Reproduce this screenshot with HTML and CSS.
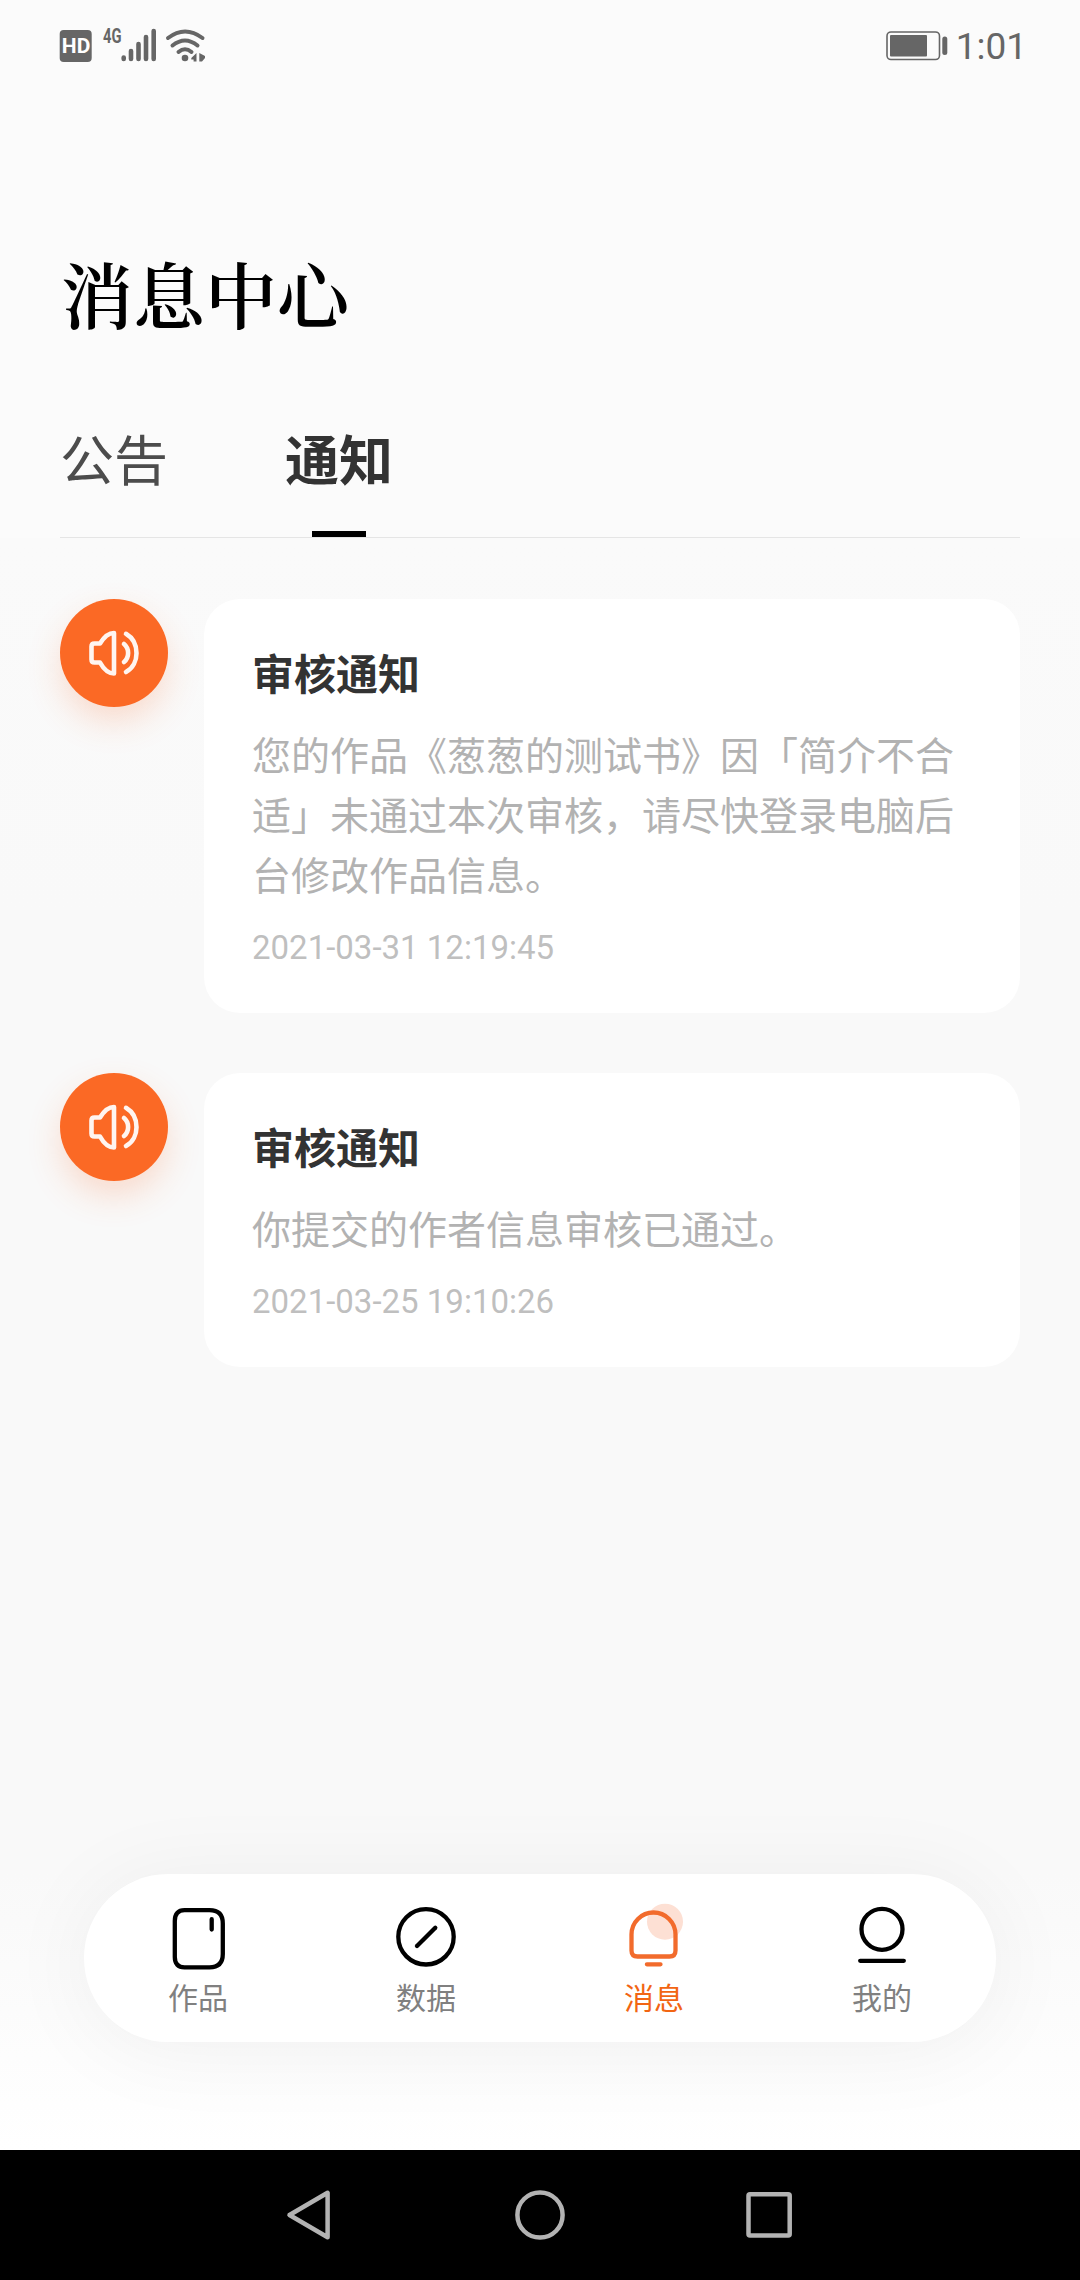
FILE: index.html
```html
<!DOCTYPE html>
<html lang="zh-CN">
<head>
<meta charset="utf-8">
<title>消息中心</title>
<link rel="stylesheet" href="styles.css">
</head>
<body>
<div class="screen">
  <header class="top">
    <div class="status">
      <svg class="status-left" width="150" height="60" viewBox="0 -10 150 60" fill="#666">
        <rect x="-.3" y="4" width="32" height="32" rx="4"/>
        <text class="hd" x="1.800" y="27.300" textLength="28.500" lengthAdjust="spacingAndGlyphs" fill="#fff">HD</text>
        <text class="net" x="43" y="17" textLength="18.500" lengthAdjust="spacingAndGlyphs">4G</text>
        <g stroke="#666" stroke-width="4.600" stroke-linecap="round">
          <path d="M63.700 31.500V33M71 25V33M78.500 18V33M86 11V33M93.700 5V33"/>
        </g>
        <g fill="none" stroke="#666" stroke-width="4" stroke-linecap="round">
          <path d="M108 12Q125-1 142.500 12M112.500 19.500Q125 9.500 137.500 19.500M118.500 26Q125 20.500 131.500 26"/>
        </g>
        <circle cx="125" cy="32" r="3.300"/>
        <path d="M136.500 27V35.500H133.600V33.500H131.300V32ZM139.300 27L145 30V32L142 35.500H139.300Z"/>
      </svg>
      <div class="status-right">
        <svg width="62" height="30" viewBox="0 0 62 30">
          <rect x="1" y="1" width="52.500" height="27.500" rx="4" fill="none" stroke="#666" stroke-width="1.600"/>
          <rect x="4" y="4" width="37" height="21.500" rx="1" fill="#666"/>
          <rect x="56.300" y="5.500" width="5" height="18.500" rx="2.500" fill="#666"/>
        </svg>
        <span class="clock">1:01</span>
      </div>
    </div>
    <h1 class="title">消息中心</h1>
    <nav class="tabs">
      <a class="tab">公告</a>
      <a class="tab tab-active">通知</a>
    </nav>
  </header>

  <svg class="defs" width="0" height="0">
    <symbol id="speaker" viewBox="0 0 108 108">
      <g fill="none" stroke="#fff5f0" stroke-width="4.600" stroke-linecap="round" stroke-linejoin="round">
        <path d="M54 34V74.500C47.500 74.500 42.500 68 40 63.500H34.500Q31.500 63.500 31.500 60.500V47.500Q31.500 44.500 34.500 44.500H40C42.500 40.500 47.500 34 54 34Z"/>
        <path d="M64 45C69.500 49.500 69.500 58.500 64 63M66 34.800C80 43 80 65.500 66 73"/>
      </g>
    </symbol>
  </svg>

  <main class="list">
    <article class="notice">
      <svg class="avatar"><use href="#speaker"/></svg>
      <div class="card">
        <h2 class="card-title">审核通知</h2>
        <p class="card-text">您的作品《葱葱的测试书》因「简介不合<br>适」未通过本次审核，请尽快登录电脑后<br>台修改作品信息。</p>
        <time class="card-time">2021-03-31 12:19:45</time>
      </div>
    </article>
    <article class="notice">
      <svg class="avatar"><use href="#speaker"/></svg>
      <div class="card">
        <h2 class="card-title">审核通知</h2>
        <p class="card-text">你提交的作者信息审核已通过。</p>
        <time class="card-time">2021-03-25 19:10:26</time>
      </div>
    </article>
  </main>

  <div class="dock">
    <nav class="menu">
      <a class="item">
        <svg width="72" height="72" viewBox="0 0 72 72" fill="none" stroke="#000" stroke-width="4.300" stroke-linecap="round"><path d="M22.500 7.200H47.500Q60.800 7.200 60.800 20.500V51Q60.800 64.300 47.500 64.300H22.500Q12.800 64.300 12.800 54V18Q12.800 7.200 22.500 7.200ZM49.700 16.200V26.500"/></svg>
        <span>作品</span>
      </a>
      <a class="item">
        <svg width="72" height="72" viewBox="0 0 72 72" fill="none" stroke="#000" stroke-width="4.300" stroke-linecap="round"><circle cx="36" cy="33.800" r="27.700"/><path d="M27 43L45.300 24.700"/></svg>
        <span>数据</span>
      </a>
      <a class="item item-active">
        <svg width="72" height="72" viewBox="0 0 72 72" fill="none" stroke="#f26b2c" stroke-width="4.300" stroke-linecap="round"><circle cx="47" cy="18.700" r="18" fill="#fde0d4" stroke="none"/><path d="M13.500 31.500A22 22 0 0 1 57.500 31.500V47.500Q57.500 53.500 51.500 53.500H19.500Q13.500 53.500 13.500 47.500ZM28.900 61.300H42.500"/></svg>
        <span>消息</span>
      </a>
      <a class="item">
        <svg width="72" height="72" viewBox="0 0 72 72" fill="none" stroke="#000" stroke-width="4.300" stroke-linecap="round"><circle cx="36" cy="26.300" r="20.500"/><path d="M14.200 57.800H57.800"/></svg>
        <span>我的</span>
      </a>
    </nav>
  </div>

  <footer class="system">
    <svg width="540" height="130" viewBox="0 0 540 130" fill="none" stroke="#b3b3b3" stroke-width="4.500" stroke-linejoin="round">
      <path d="M57.600 42.800V87.200L19.500 65Z"/>
      <circle cx="270" cy="65" r="22.600"/>
      <rect x="478.500" y="44.300" width="41.200" height="41.200" rx="1.500"/>
    </svg>
  </footer>
</div>
</body>
</html>
```
FILE: styles.css
```css
* { box-sizing: border-box; }
body, h1, h2, p { margin: 0; }
body {
  font-family: Roboto, "Noto Sans CJK SC", sans-serif;
  background: #f9f9f9;
}
.screen {
  width: 1080px;
  height: 2280px;
  display: flex;
  flex-direction: column;
  overflow: hidden;
}
.defs { display: block; height: 0; }
.top { height: 538px; background: #fbfbfb; padding: 0 60px; }
.status {
  height: 90px;
  padding-top: 2px;
  display: flex;
  justify-content: space-between;
  align-items: center;
  margin-right: -7px;
}
.status-left { overflow: visible; }
.hd { font: 700 21px Roboto, sans-serif; }
.net { font: 700 20px Roboto, sans-serif; }
.status-right { display: flex; align-items: center; gap: 8px; }
.clock { padding-top: 2px; font-size: 37px; line-height: 40px; color: #666; }
.title {
  margin-top: 148px;
  font: 600 72px/108px "Noto Serif CJK SC", "Noto Serif SC", "Noto Serif CJK JP", "Noto Sans CJK SC", serif;
  text-indent: 1px;
  color: #000;
}
.tabs {
  margin-top: 40px;
  height: 152px;
  display: flex;
  gap: 117px;
  border-bottom: 1px solid #e5e5e5;
}
.tab {
  height: 151px;
  padding-top: 37px;
  font-size: 54px;
  line-height: 80px;
  color: #4c4c4c;
}
.tab-active {
  font-weight: 700;
  color: #333;
  background: linear-gradient(#000, #000) center bottom / 54px 6px no-repeat;
}
.list {
  flex: 1;
  padding: 61px 60px 0;
  display: flex;
  flex-direction: column;
  gap: 60px;
  background: linear-gradient(#fafafa, #f9f9f9 30%);
}
.notice { display: flex; align-items: flex-start; gap: 36px; }
.avatar {
  width: 108px;
  height: 108px;
  border-radius: 50%;
  background: #fb6925;
  box-shadow: 0 15px 36px -3px rgba(251, 105, 37, .24);
}
.card {
  flex: 1;
  padding: 44px 48px 43px;
  border-radius: 36px;
  background: #fff;
}
.card-title { font-size: 42px; line-height: 66px; font-weight: 700; color: #333; }
.card-text { margin-top: 18px; font-size: 39px; line-height: 60px; color: #b2b2b2; white-space: nowrap; }
.card-time { display: block; margin-top: 18px; font-size: 33px; line-height: 45px; color: #bfbfbf; }
.dock {
  height: 350px;
  padding: 74px 84px 0;
  background: linear-gradient(#f9f9f9 74px, #fff 100%);
}
.menu {
  height: 168px;
  border-radius: 84px;
  background: #fff;
  display: flex;
  box-shadow: 0 6px 90px rgba(0, 0, 0, .055);
}
.item {
  flex: 1;
  padding-top: 29px;
  display: flex;
  flex-direction: column;
  align-items: center;
  gap: 2px;
  font-size: 30px;
  line-height: 44px;
  color: #808080;
}
.item svg { overflow: visible; flex: none; }
.item-active { color: #f26513; }
.system {
  height: 130px;
  background: #000;
  display: flex;
  justify-content: center;
}
```
